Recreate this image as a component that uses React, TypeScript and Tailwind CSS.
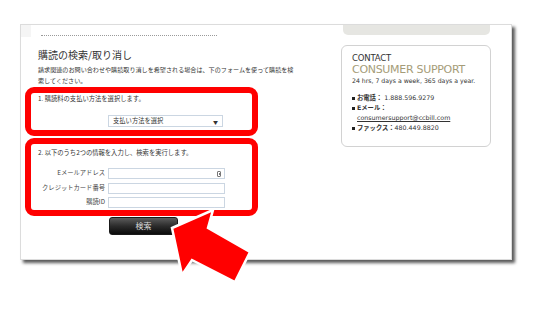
const fieldRows = [
  { label: "Eメールアドレス", icon: true },
  { label: "クレジットカード番号", icon: false },
  { label: "購読ID", icon: false },
];

const SearchArrow = () => (
  <svg
    className="absolute left-0 top-0 pointer-events-none"
    width="539"
    height="324"
    viewBox="0 0 539 324"
  >
    <polygon
      points="172,228 213,210 208,228 250,252 235,282 192,260 182,275"
      fill="#ff0000"
      stroke="#ffffff"
      strokeWidth="2.5"
      strokeLinejoin="miter"
    />
  </svg>
);

const ContactBox = () => (
  <div className="w-[150px] ml-[82px] flex flex-col">
    <div className="ml-[2px] w-[147px] h-[10px] bg-[#e6e6e2] rounded-b-[5px]" />
    <div className="mt-[10px] h-[102px] border border-[#d2d2d2] rounded-[6px] pl-[10px] pt-[7px] font-['DejaVu_Sans','Noto_Sans_CJK_JP',sans-serif] text-[#333]">
      <div className="text-[8.5px] leading-[11px] tracking-[-0.2px]">CONTACT</div>
      <div className="text-[11px] leading-[11px] text-[#a59c78] tracking-[-0.3px]">
        CONSUMER SUPPORT
      </div>
      <div className="text-[6.2px] leading-[11px]">
        24 hrs, 7 days a week, 365 days a year.
      </div>
      <div className="mt-[7px] text-[6.3px] leading-[10px]">
        <div className="flex items-center">
          <span className="inline-block w-[3px] h-[3px] bg-[#222] mr-[2px]" />
          <span className="font-bold">お電話：</span>
          <span className="ml-[2px]">1.888.596.9279</span>
        </div>
        <div className="flex items-center">
          <span className="inline-block w-[3px] h-[3px] bg-[#222] mr-[2px]" />
          <span className="font-bold">Eメール：</span>
        </div>
        <div className="pl-[5px] underline">consumersupport@ccbill.com</div>
        <div className="flex items-center">
          <span className="inline-block w-[3px] h-[3px] bg-[#222] mr-[2px]" />
          <span className="font-bold">ファックス：</span>
          <span>480.449.8820</span>
        </div>
      </div>
    </div>
  </div>
);

const SearchForm = () => (
  <div className="w-[238px] pl-[4px] flex flex-col">
    <div className="flex items-end h-[12px]">
      <div className="w-[10px] h-[12px] bg-[#f5f5f5] -ml-[4px]" />
      <div className="ml-[10px] w-[176px] border-t border-dotted border-[#9a9a9a] mb-[1px]" />
    </div>

    <div className="mt-[12px] ml-[13px] text-[10px] leading-[12px] text-[#333]">
      購読の検索/取り消し
    </div>
    <p className="mt-[3px] ml-[13px] text-[6.1px] leading-[11px] text-[#333] whitespace-nowrap">
      請求関連のお問い合わせや購読取り消しを希望される場合は、下のフォームを使って購読を検
      <br />
      索してください。
    </p>

    <div className="mt-[1px] w-[233px] h-[49px] border-[6px] border-[#ff0000] rounded-[9px] pl-[7px] pt-[1px] text-[#333]">
      <div className="text-[6.3px] leading-[9px]">1. 購読料の支払い方法を選択します。</div>
      <div className="mt-[12px] ml-[70px] w-[115px] h-[12px] border border-[#cbd6e2] bg-white flex items-center justify-between px-[4px]">
        <span className="text-[6.3px] leading-none">支払い方法を選択</span>
        <span className="text-[5px] leading-none">▼</span>
      </div>
    </div>

    <div className="mt-[2px] w-[233px] h-[78px] border-[6px] border-[#ff0000] rounded-[9px] pl-[7px] pt-[4px] text-[#333]">
      <div className="text-[6.3px] leading-[9px]">2. 以下のうち2つの情報を入力し、検索を実行します。</div>
      <div className="mt-[11px] flex flex-col gap-[3.5px]">
        {fieldRows.map((row) => (
          <div key={row.label} className="flex items-center h-[11px]">
            <span className="w-[67px] text-right text-[6.3px] leading-none text-[#444]">
              {row.label}
            </span>
            <div className="ml-[3px] w-[117px] h-[11px] border border-[#cbd6e2] bg-white flex items-center justify-end pr-[3px]">
              {row.icon && (
                <span className="w-[4px] h-[6px] border border-[#777] rounded-[1px] flex items-center justify-center">
                  <span className="w-[1px] h-[2px] bg-[#777]" />
                </span>
              )}
            </div>
          </div>
        ))}
      </div>
    </div>

    <button className="mt-[1px] ml-[84px] w-[69px] h-[18px] rounded-[3px] border border-[#1a1a1a] bg-gradient-to-b from-[#5c5c5c] via-[#2c2c2c] to-[#0c0c0c] text-[#dcdcdc] text-[8px] leading-none flex items-center justify-center">
      検索
    </button>
  </div>
);

export default function App() {
  return (
    <div className="relative w-[539px] h-[324px] bg-white overflow-hidden font-['Noto_Sans_CJK_JP',sans-serif]">
      <div className="ml-[20px] mt-[24px] w-[492px] h-[236px] border border-[#dcdcdc] bg-white shadow-[3px_3px_3px_rgba(0,0,0,0.65)] flex">
        <SearchForm />
        <ContactBox />
      </div>
      <SearchArrow />
    </div>
  );
}
